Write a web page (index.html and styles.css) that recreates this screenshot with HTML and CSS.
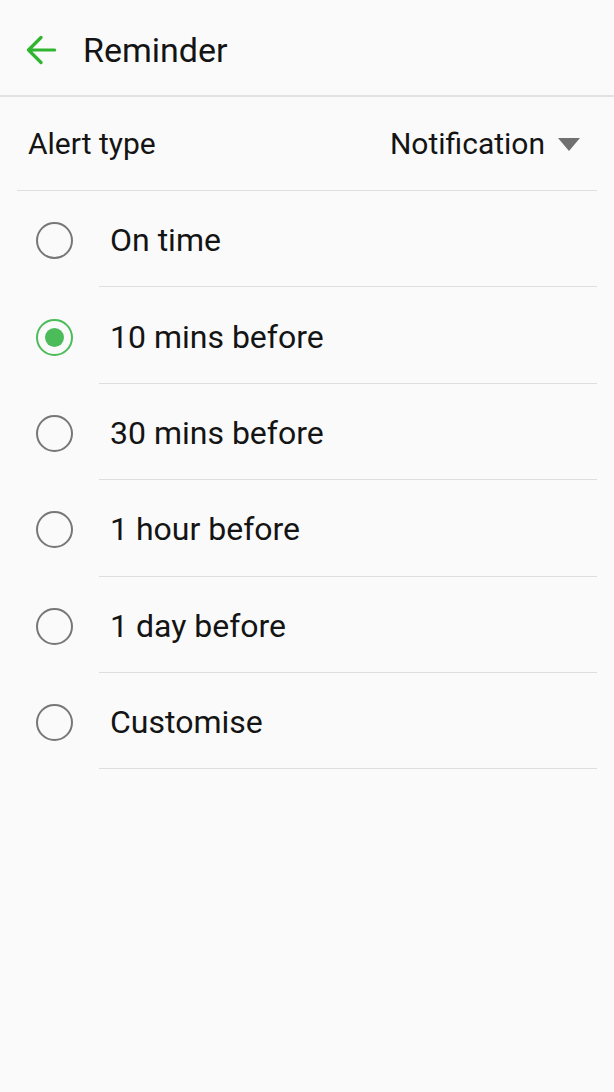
FILE: index.html
```html
<!DOCTYPE html>
<html>
<head>
<meta charset="utf-8">
<link rel="stylesheet" href="styles.css">
</head>
<body>
<div class="screen">
  <header class="appbar">
    <svg class="back" width="30" height="30" viewBox="0 0 30 30">
      <path d="M28.5 15H2.5M15 2.5L2.5 15L15 27.5" fill="none" stroke="#2fb52f" stroke-width="3.2" stroke-linecap="round" stroke-linejoin="round"/>
    </svg>
    <h1 class="title">Reminder</h1>
  </header>
  <div class="alert-row">
    <span class="alert-label">Alert type</span>
    <span class="alert-value">Notification<span class="caret"></span></span>
  </div>
  <ul class="options">
    <li class="option"><span class="radio"></span><span class="option-text">On time</span></li>
    <li class="option"><span class="radio checked"></span><span class="option-text">10 mins before</span></li>
    <li class="option"><span class="radio"></span><span class="option-text">30 mins before</span></li>
    <li class="option"><span class="radio"></span><span class="option-text">1 hour before</span></li>
    <li class="option"><span class="radio"></span><span class="option-text">1 day before</span></li>
    <li class="option"><span class="radio"></span><span class="option-text">Customise</span></li>
  </ul>
</div>
</body>
</html>
```
FILE: styles.css
```css
html, body {
  margin: 0;
  padding: 0;
  background: #fafafa;
}
body {
  font-family: Roboto, "Noto Sans", sans-serif;
  color: #141414;
}
.screen {
  width: 614px;
  min-height: 1092px;
  background: #fafafa;
}
.appbar {
  box-sizing: border-box;
  height: 97px;
  display: flex;
  align-items: center;
  padding-left: 26px;
  border-bottom: 2px solid #e2e2e2;
}
.back {
  display: block;
  margin-top: 4px;
}
.title {
  margin: 4px 0 0 27px;
  font-size: 34px;
  font-weight: 400;
}
.alert-row {
  margin: 0 17px;
  height: 93px;
  display: flex;
  align-items: center;
  justify-content: space-between;
  border-bottom: 1px solid #dedede;
  padding: 0 17px 0 11px;
}
.alert-label {
  font-size: 30px;
}
.alert-value {
  font-size: 30px;
  display: flex;
  align-items: center;
}
.caret {
  width: 0;
  height: 0;
  border-left: 11px solid transparent;
  border-right: 11px solid transparent;
  border-top: 13px solid #707070;
  margin-left: 13px;
  margin-top: 1px;
}
.options {
  list-style: none;
  margin: 0;
  padding: 0;
}
.option {
  box-sizing: border-box;
  display: flex;
  align-items: center;
  height: 96.4px;
  padding-top: 3px;
}
.radio {
  width: 37px;
  height: 37px;
  box-sizing: border-box;
  border: 2.5px solid #777;
  border-radius: 50%;
  margin-left: 36px;
  margin-right: 37px;
  flex: none;
  display: flex;
  align-items: center;
  justify-content: center;
}
.radio.checked {
  border-color: #4cbc5a;
}
.radio.checked::after {
  content: "";
  width: 19px;
  height: 19px;
  border-radius: 50%;
  background: #4cbc5a;
}
.option-text {
  flex: 1;
  align-self: stretch;
  display: flex;
  align-items: center;
  font-size: 32px;
  margin-right: 17px;
  border-bottom: 1px solid #dedede;
  padding-left: 11px;
  margin-left: -11px;
}
```
